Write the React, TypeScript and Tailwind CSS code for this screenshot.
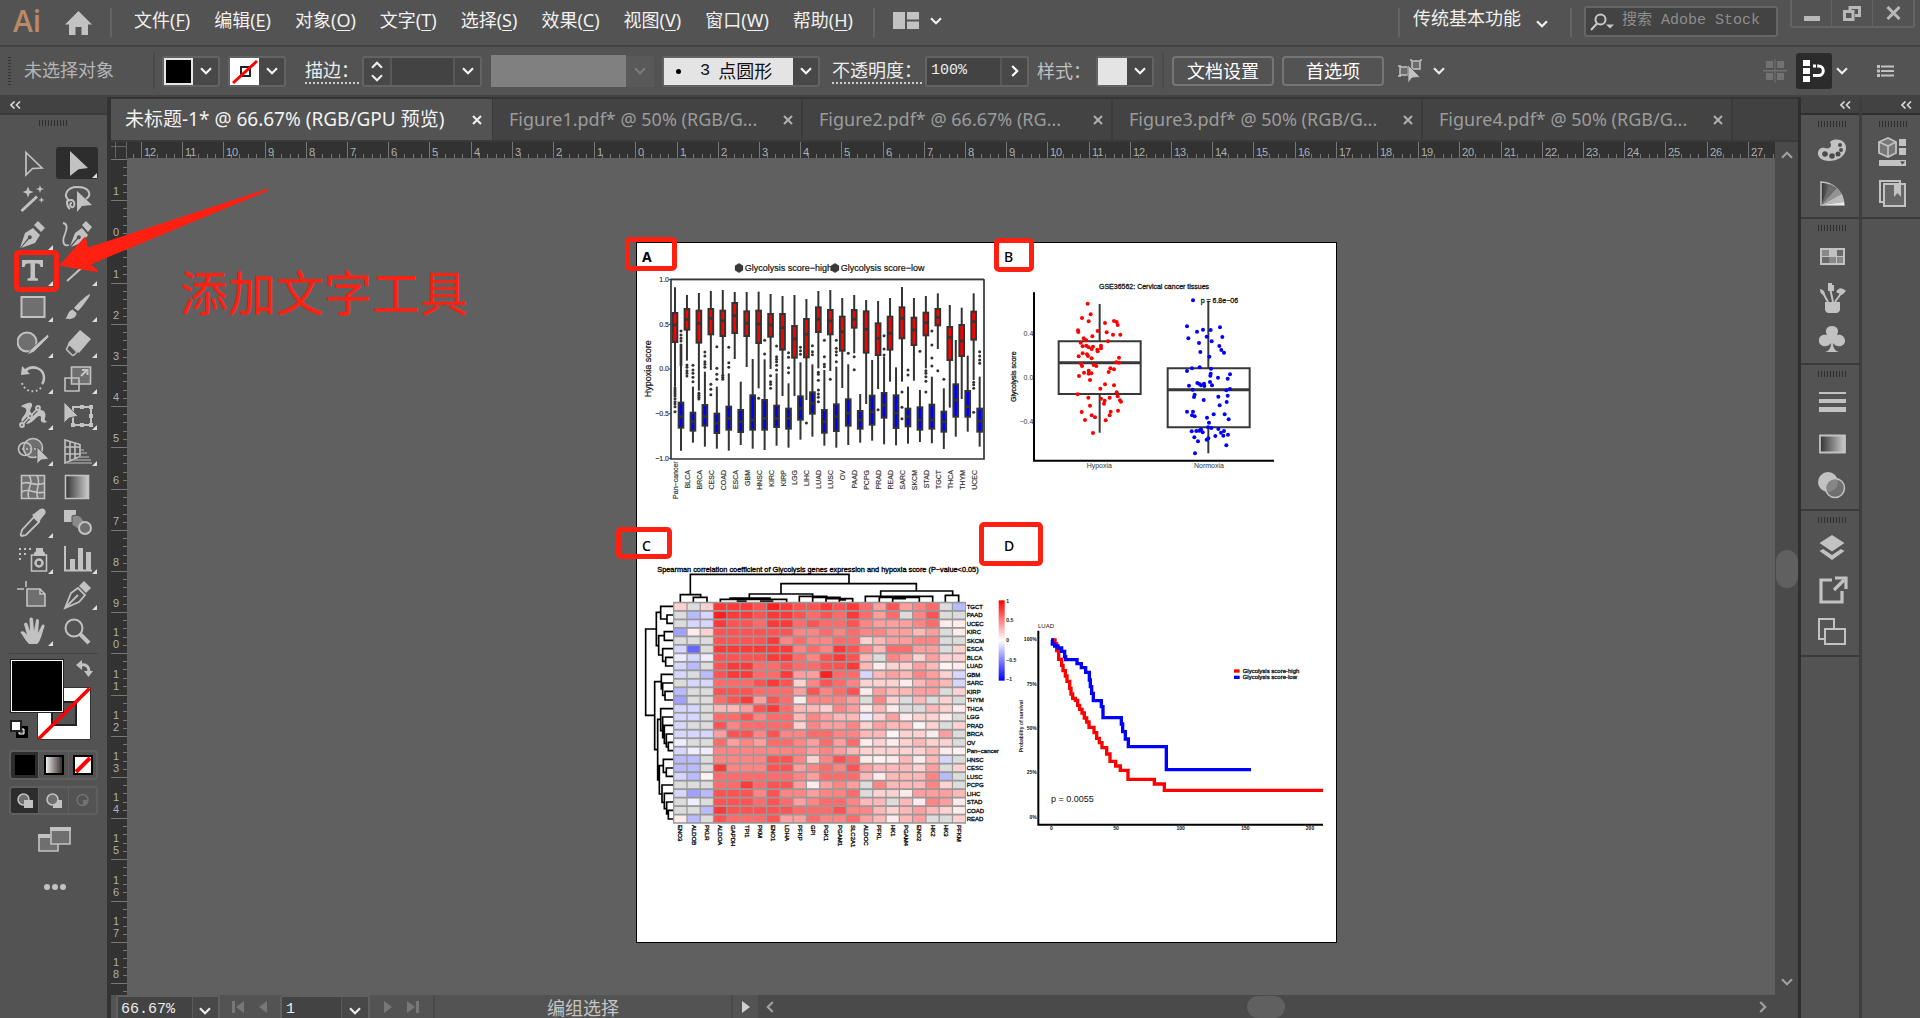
import React from "react";

const UI = "font-['Noto_Sans','Noto_Sans_CJK_SC',sans-serif]";
const MONO = "font-['Liberation_Mono','Noto_Sans_CJK_SC',monospace]";
const INK = "#c2c2c2";

function Chevron({ className = "" }: { className?: string }) {
  return (
    <svg className={"pointer-events-none shrink-0 " + className} width="12" height="8" viewBox="0 0 12 8" fill="none" stroke="currentColor" strokeWidth="2.2">
      <path d="M1 1.2 6 6.2 11 1.2" />
    </svg>
  );
}

function Close() {
  return (
    <svg width="10" height="10" viewBox="0 0 10 10" fill="none" stroke="currentColor" strokeWidth="2">
      <path d="M1 1 9 9M9 1 1 9" />
    </svg>
  );
}

function Divider({ className = "" }: { className?: string }) {
  return <div className={"w-[2px] shrink-0 bg-[#646464] " + className} />;
}

/* ---------- Menu bar ---------- */

const menus: [string, string][] = [
  ["文件", "F"], ["编辑", "E"], ["对象", "O"], ["文字", "T"], ["选择", "S"],
  ["效果", "C"], ["视图", "V"], ["窗口", "W"], ["帮助", "H"],
];

function MenuBar() {
  return (
    <header className="flex h-[45px] shrink-0 items-start bg-[#535353] text-[18px] text-[#f0f0f0]">
      <div className="ml-[13px] mt-[3px] w-[40px] font-['Open_Sans',sans-serif] text-[30px] font-semibold leading-[36px] text-[#b98a68]">Ai</div>
      <button aria-label="主页" className="ml-[12px] mt-[11px]">
        <svg width="27" height="24" viewBox="0 0 27 24" fill={INK}><path d="M13.500 0 27 13.500h-4V24h-6.500v-8h-6v8H4V13.500H0Z" /></svg>
      </button>
      <Divider className="ml-[18px] mt-[8px] h-[29px]" />
      <nav className="ml-[22px] mt-[7px] flex gap-[24px] leading-[27px]">
        {menus.map(([t, k]) => (
          <button key={k} className="whitespace-nowrap">{t}(<span className="underline underline-offset-[3px]">{k}</span>)</button>
        ))}
      </nav>
      <Divider className="ml-[20px] mt-[8px] h-[29px]" />
      <button aria-label="排列文档" className="ml-[18px] mt-[12px] flex items-center gap-[11px]">
        <svg width="26" height="17" viewBox="0 0 26 17" fill={INK}><path d="M0 0h12v17H0zM14 0h12v7.500H14zM14 9.500h12V17H14z" /></svg>
        <Chevron />
      </button>
      <div className="flex-1" />
      <Divider className="mt-[8px] h-[29px]" />
      <div className="relative ml-[13px] mt-[4px] w-[141px]">
        <select aria-label="工作区" className="w-full appearance-none bg-transparent leading-[28px] outline-none"><option>传统基本功能</option></select>
        <Chevron className="absolute right-[6px] top-[16px]" />
      </div>
      <Divider className="ml-[16px] mt-[8px] h-[29px]" />
      <div className="ml-[12px] mt-[6px] flex h-[31px] w-[194px] items-center gap-[7px] rounded-[3px] border-2 border-[#666] bg-[#434343] pl-[4px]">
        <svg className="shrink-0" width="25" height="18" viewBox="0 0 25 18" fill="none" stroke="#c8c8c8" strokeWidth="2"><circle cx="10.500" cy="6.500" r="5" /><path d="M7 10.500 1 17" /><path d="M16 11.500h8l-4 4z" fill="#c8c8c8" stroke="none" /></svg>
        <input aria-label="搜索" placeholder="搜索 Adobe Stock" className={"w-full min-w-0 bg-transparent text-[15px] outline-none placeholder:text-[#8e8e8e] " + MONO} />
      </div>
      <div className="ml-[12px] mr-[5px] flex h-[28px] rounded-b-[3px] border-x-2 border-b-2 border-[#636363] text-[#b8b8b8]">
        <button aria-label="最小化" className="flex w-[40px] items-center justify-center border-r border-[#636363]"><svg width="16" height="18" viewBox="0 0 16 18"><path fill="currentColor" d="M0 12h16v5H0z" /></svg></button>
        <button aria-label="还原" className="flex w-[41px] items-center justify-center border-r border-[#636363]"><svg width="18" height="15" viewBox="0 0 18 15" fill="none" stroke="currentColor" strokeWidth="3"><path d="M7 4.500V1.500h9.500v8H12M1.500 5.500H10v8H1.500z" /></svg></button>
        <button aria-label="关闭" className="flex w-[40px] items-center justify-center"><svg width="15" height="14" viewBox="0 0 15 14" fill="none" stroke="currentColor" strokeWidth="3"><path d="M1.500 1 13.500 13M13.500 1 1.500 13" /></svg></button>
      </div>
    </header>
  );
}

/* ---------- Control bar ---------- */

const box = "flex h-[31px] shrink-0 items-stretch rounded-[3px] border-2 border-[#636363] bg-[#484848]";
const dd = "flex w-[25px] items-center justify-center text-[#f4f4f4]";
const label = "shrink-0 whitespace-nowrap leading-[24px]";

function ControlBar() {
  return (
    <div className="flex h-[52px] shrink-0 items-center border-b-2 border-t-2 border-b-[#434343] border-t-[#434343] bg-[#535353] text-[18px] text-[#ececec]">
      <div className="ml-[8px] h-[28px] w-[3px] shrink-0 bg-[repeating-linear-gradient(#333_0_1px,transparent_1px_3px)]" />
      <span className="ml-[13px] w-[129px] shrink-0 whitespace-nowrap leading-[28px] pb-[2px] text-[#b4b4b4]">未选择对象</span>
      <div className="h-[36px] w-[2px] shrink-0 bg-[#4a4a4a]" />
      <button aria-label="填色" className={box + " ml-[7px]"}>
        <span className="w-[29px] border-2 border-[#e6e6e6] bg-black" />
        <span className={dd}><Chevron /></span>
      </button>
      <button aria-label="描边颜色" className={box + " ml-[8px]"}>
        <svg width="29" height="27" viewBox="0 0 29 27" fill="none"><path fill="#fff" d="M0 0h29v27H0z" /><path d="M11 9h9v9h-9z" stroke="#222" strokeWidth="2" /><path d="M3 25 27 3" stroke="#f00" strokeWidth="3" /></svg>
        <span className={dd}><Chevron /></span>
      </button>
      <label htmlFor="sw" className={label + " ml-[19px] border-b-2 border-dotted border-[#ccc]"}>描边：</label>
      <div className={box + " ml-[3px]"}>
        <div className="flex w-[26px] flex-col items-center justify-between py-[3px]">
          <button aria-label="增加" className="rotate-180"><Chevron className="block" /></button>
          <button aria-label="减少"><Chevron className="block" /></button>
        </div>
        <input id="sw" className="w-[65px] border-x-2 border-[#585858] bg-[#434343] outline-none" />
        <button aria-label="描边粗细" className={dd}><Chevron /></button>
      </div>
      <div className="ml-[9px] h-[32px] w-[135px] shrink-0 bg-[#808080]" />
      <div className="flex h-[31px] w-[28px] shrink-0 items-center justify-center bg-[#595959] text-[#7a7a7a]"><Chevron /></div>
      <button className={box + " ml-[8px]"}>
        <span className="flex w-[129px] items-center bg-[#e4e4e4] text-[#111]"><span className="ml-[12px] h-[5px] w-[5px] rounded-full bg-black" /><span className={"ml-[19px] text-[17px] " + MONO}>3</span><span className="ml-[8px] whitespace-nowrap">点圆形</span></span>
        <span className={dd}><Chevron /></span>
      </button>
      <label htmlFor="op" className={label + " ml-[12px] border-b-2 border-dotted border-[#ccc]"}>不透明度：</label>
      <div className={box + " ml-[3px]"}>
        <input id="op" defaultValue="100%" className={"w-[75px] border-r-2 border-[#585858] bg-[#434343] pl-[4px] text-[15px] outline-none " + MONO} />
        <button aria-label="不透明度滑块" className="flex w-[25px] items-center justify-center text-white"><Chevron className="-rotate-90" /></button>
      </div>
      <span className={label + " ml-[8px] text-[#c0c0c0]"}>样式：</span>
      <button aria-label="样式" className={box + " ml-[5px]"}>
        <span className="w-[29px] bg-[#e4e4e4]" />
        <span className={dd}><Chevron /></span>
      </button>
      <div className="ml-[8px] h-[36px] w-[2px] shrink-0 bg-[#4a4a4a]" />
      <button className="ml-[8px] h-[30px] w-[102px] shrink-0 rounded-[4px] border-2 border-[#757575] leading-[26px] text-white">文档设置</button>
      <button className="ml-[8px] h-[30px] w-[102px] shrink-0 rounded-[4px] border-2 border-[#757575] leading-[26px] text-white">首选项</button>
      <button aria-label="选择类似对象" className="ml-[14px] flex shrink-0 items-center gap-[10px]">
        <svg width="25" height="24" viewBox="0 0 25 24" fill="#6b6b6b" stroke={INK} strokeWidth="1.500"><path d="M14 2h8v8h-8zM2 8h8v8H2zM12 1h2m8 0h2M0 7h3M0 17h3" /><path d="M10 6v18l4-5 8-1z" fill={INK} stroke="#535353" strokeWidth=".7" /></svg>
        <Chevron />
      </button>
      <div className="flex-1" />
      <svg width="24" height="24" viewBox="0 0 24 24" fill="#727272"><path d="M3 2h7v7H3zM14 2h7v7h-7zM3 14h7v7H3zM14 14h7v7h-7zM0 11h24v1.500H0zM11.500 0h1v24h-1z" /></svg>
      <button aria-label="对齐像素" className="ml-[9px] flex h-[36px] w-[36px] items-center justify-center rounded-[3px] bg-[#2b2b2b]">
        <svg width="22" height="22" viewBox="0 0 22 22" fill="#fff"><path d="M0 0h7v6H0zM0 8h7v6H0zM0 16h7v6H0z" /><path d="M10 6h5.500a4.800 4.800 0 0 1 0 9.600H10" fill="none" stroke="#fff" strokeWidth="3" strokeDasharray="3 1.200 30" /></svg>
      </button>
      <Chevron className="ml-[4px]" />
      <button aria-label="面板菜单" className="ml-[29px] mr-[26px]">
        <svg width="17" height="12" viewBox="0 0 17 12" fill={INK}><path d="M0 0h3v3H0zM4 .5h13v2H4zM0 4.500h3v3H0zM4 5h13v2H4zM0 9h3v3H0zM4 9.500h13v2H4z" /></svg>
      </button>
    </div>
  );
}

/* ---------- Tool panel ---------- */

const line = { fill: "none", stroke: INK, strokeWidth: 1.6 } as const;
const dim = { fill: "#6f6f6f", stroke: INK, strokeWidth: 1.6 } as const;

type Tool = { name: string; more?: boolean; active?: boolean; icon: React.ReactNode };

const tools: Tool[] = [
  { name: "选择工具", icon: <path d="M9 5.500 25 21l-9.500.5L9 28z" {...line} strokeWidth={1.700} /> },
  { name: "直接选择工具", more: true, active: true, icon: <path d="M9 4 27 21l-9.500 1.200L9 29z" /> },
  { name: "魔棒工具", icon: <g><path d="M4.500 28 20 13.500" stroke={INK} strokeWidth="3" /><path d="M11 3.500l1.500 4 4 1.500-4 1.500-1.500 4-1.500-4L5.500 9l4-1.500zM23 2l1 3 3 1-3 1-1 3-1-3-3-1 3-1zM24.500 14l.8 2.200 2.200.8-2.200.8-.8 2.200-.8-2.200-2.200-.8 2.200-.8z" /></g> },
  { name: "套索工具", icon: <g><path d="M9 18C1 13 6 4 16 4c13 0 15 8 9 12M9 18c-5-3-3 6 0 8m-2-8c6-4 8 4 5 6-3 1-4-4-1-4" {...line} strokeWidth={2} /><path d="M16 8v21l5-6 10-1z" /></g> },
  { name: "钢笔工具", more: true, icon: <g><path d="M3 29 8 14l8-5 7 7-5 8-14 5 8-9a2 2 0 1 0-1-1z" /><path d="M17 6l4-4 7 7-4 4z" /></g> },
  { name: "曲率工具", icon: <g><path d="M2 4c5 1 4 6 2 11-3 7-2 13 4 11" {...line} strokeWidth={1.800} /><path d="M9 27l5-13 7-5 6 7-5 7-12 5 7-8a2 2 0 1 0-1-1zM21 6l4-4 6 6-4 5z" /></g> },
  { name: "文字工具", more: true, icon: <path d="M5 5h21v7h-2.500c-.4-2.400-1.200-3.500-3.500-3.500h-2V21c0 2 .6 2.300 3 2.500v2.300H10.500v-2.300c2.500-.2 3-.5 3-2.500V8.500h-2.300C9 8.500 8 9.600 7.500 12H5z" /> },
  { name: "直线段工具", more: true, icon: <path d="M6 26 26 8" {...line} strokeWidth={2} /> },
  { name: "矩形工具", more: true, icon: <path d="M4.500 6h23v20h-23z" {...dim} strokeWidth={2} /> },
  { name: "画笔工具", more: true, icon: <g><path d="M29 3c1 1-7 12-12 17l-4-3C17 12 27 3 29 3z" /><path d="M11.500 18.500l4 3.500c0 5-5 7-11.500 5.500 3-1 2-7 7.500-9z" /></g> },
  { name: "Shaper 工具", more: true, icon: <g><circle cx="10" cy="15" r="9.500" {...dim} strokeWidth={2} /><path d="M31 7l-17 15-4 6 7-3L32 10z" stroke="#535353" strokeWidth=".8" /></g> },
  { name: "橡皮擦工具", more: true, icon: <g><path d="M19 3l11 9-12 14L7 16z" /><path d="M8 17l8 8-3 3q-1 .8-2 0l-5-5q-1-1 0-2z" {...line} /></g> },
  { name: "旋转工具", more: true, icon: <g><path d="M8 8c7-7 19-3 19 7 0 3-1 5-2 6" {...line} strokeWidth={2.500} /><path d="M4 12l1-9 8 8z" /><path d="M5 20c3 10 16 11 20 3" {...line} strokeDasharray="1.800 2.600" strokeWidth={2} /></g> },
  { name: "比例缩放工具", more: true, icon: <g><path d="M10.500 4h19v17h-19z" {...dim} /><path d="M4 15h14v13H4z" {...line} /><path d="M20 13l6-6m-5 0h5.500v5" {...line} strokeWidth={2} /></g> },
  { name: "宽度工具", more: true, icon: <g><path d="M4 7c4-2 8-4 10-3 3 2-1 6-1 8 2 4 5-1 10-1 6 0 6 5 5 8-1 2 1 3 2 4-5 2-7-1-6-4 0-3-3-2-5 0-4 5-10 8-14 4-3-4 6-8 4-13-1-2-3-1-5-3z" /><path d="M5 26 21 9" stroke="#535353" strokeWidth="4" /><g {...dim} strokeWidth={1.800}><path d="M5 26 21 9" /><circle cx="5" cy="26" r="2" /><circle cx="13" cy="17" r="2" /><circle cx="21" cy="9" r="2" /></g></g> },
  { name: "自由变换工具", more: true, icon: <g><path d="M12 8h18v18H12z" {...line} strokeWidth={2} /><path d="M28 6h4v4h-4zM28 24h4v4h-4zM10 24h4v4h-4zM19 6h4v4h-4zM19 24h4v4h-4zM28 15h4v4h-4z" /><path d="M3 3v21l5-5 9-2z" stroke="#535353" strokeWidth=".8" /></g> },
  { name: "形状生成器工具", more: true, icon: <g><circle cx="16" cy="13" r="9.500" {...dim} /><circle cx="8" cy="14" r="6.500" {...line} /><path d="M5 14h14" {...line} strokeDasharray="2 2" /><path d="M20 12v17l4-4 8-1z" stroke="#535353" strokeWidth=".8" /></g> },
  { name: "透视网格工具", more: true, icon: <g><path d="M4 5l15 4.500v12L4 28zM9 6v20M14 8v16M4 12h15M4 19h15" {...line} /><path d="M20 15h3M20 18h6M17 22h11M12 25h18M6 28h25" {...line} stroke="#9a9a9a" /></g> },
  { name: "网格工具", icon: <g><path d="M4.500 4.500h23v23h-23z" {...dim} /><path d="M4.500 13c6-5 13 4 23-1M4.500 21c7-5 14 3 23 0M12 4.500c6 8-4 14 0 23M20 4.500c5 8-3 15 1 23" {...line} /></g> },
  { name: "渐变工具", icon: <path d="M4.500 4.500h23v23h-23z" fill="url(#gradDark)" stroke={INK} strokeWidth="1.600" /> },
  { name: "吸管工具", more: true, icon: <g><path d="M17 10l5 5L9 28c-2 1-3 0-4 1-1 0-2-1-1-2l1-4z" {...line} strokeWidth={1.800} /><path d="M15 8l3-2 5-4c4-2 7 2 5 5l-4 5-2 4z" /></g> },
  { name: "混合工具", icon: <g><path d="M3 3h12v12H3z" /><path d="M11 9q4-2 8 0l4 5v6l-6 2-6-4z" fill="#8a8a8a" stroke="#535353" /><circle cx="24" cy="21" r="6" {...dim} strokeWidth={2} /></g> },
  { name: "符号喷枪工具", more: true, icon: <g><path d="M14.500 12h15v16h-15z" {...line} /><path d="M19 5h7v3l2 2v3H17v-3l2-2z" /><circle cx="22" cy="20" r="3.500" {...line} strokeWidth={2.500} /><path d="M2 5h2v2H2zM7 5h2v2H7zM12 5h2v2h-2zM2 10h2v2H2zM7 10h2v2H7zM2 15h2v2H2z" /></g> },
  { name: "柱形图工具", more: true, icon: <g><path d="M4 3v24.500h27" {...line} strokeWidth={2} /><path d="M9 16h5v11H9zM17 5h5v22h-5zM25 9h5v18h-5z" /></g> },
  { name: "画板工具", icon: <path d="M10 10h13l5 5v12H10zM0 10h7M9 2v6M23 10v5h5" {...dim} /> },
  { name: "切片工具", more: true, icon: <g><path d="M4 29 10 14l7-5 7 7-6 7zL17 16" {...line} strokeWidth={1.800} /><path d="M18 7l5-5 7 7-5 5z" /></g> },
  { name: "抓手工具", more: true, icon: <path d="M12 29C9 26 6 21 3.500 17.500 5 15 8 17 10 20L7 9c1-2 3-1.500 3.500 0l2.500 7-.500-12c.5-2 3-2 3.500 0l1 12 2-11c1-2 3-1 3 1l-1 12 4-8c1.500-1 3 0 2.500 1.500C25 18 24 26 20 29z" /> },
  { name: "缩放工具", icon: <g><circle cx="13" cy="13" r="8.500" {...line} strokeWidth={2} /><path d="M19 19l9 9" {...line} strokeWidth={4} /></g> },
];

function Grip() {
  return <div className="h-[6px] w-[29px] bg-[repeating-linear-gradient(90deg,#2e2e2e_0_1px,transparent_1px_3px)]" />;
}

function Collapse() {
  return <svg width="11" height="8" viewBox="0 0 11 8" fill="none" stroke="#d8d8d8" strokeWidth="1.600"><path d="M4.500 0.500 1 4l3.500 3.500M10 0.500 6.500 4 10 7.500" /></svg>;
}

const modeRow = "ml-[9px] flex w-[89px] shrink-0 overflow-hidden rounded-[4px] border-2 border-[#5f5f5f]";
const modeSide = "flex w-[27px] items-center justify-center";
const modeMiddle = "flex flex-1 items-center justify-center border-x border-[#5f5f5f]";

function ToolPanel() {
  return (
    <aside className="flex w-[111px] shrink-0 flex-col border-r-4 border-[#333] bg-[#535353]">
      <button aria-label="折叠" className="flex h-[18px] shrink-0 items-center border-b-2 border-[#3a3a3a] bg-[#424242] pl-[10px]"><Collapse /></button>
      <div className="flex h-[30px] shrink-0 justify-center pt-[5px]"><Grip /></div>
      <div className="ml-[11px] grid w-[88px] grid-cols-2">
        {tools.map((t) => (
          <button key={t.name} aria-label={t.name} className="relative flex h-[36px] w-[44px] items-center justify-center">
            {t.active && <span className="absolute inset-x-[1px] inset-y-[2px] rounded-[3px] bg-[#2d2d2d]" />}
            <svg className="relative" width="32" height="32" viewBox="0 0 32 32" fill={INK}>{t.icon}</svg>
            {t.more && <svg className="absolute bottom-[3px] right-[2px]" width="5" height="5"><path d="M5 0v5H0z" fill="#ddd" /></svg>}
          </button>
        ))}
      </div>
      <div className="mx-[9px] mt-[4px] h-[1px] shrink-0 bg-[#444]" />
      <div className="relative mt-[5px] ml-[10px] h-[81px] w-[88px] shrink-0">
        <svg className="absolute left-[27px] top-[28px]" width="54" height="53" viewBox="0 0 54 53"><path d="M.5.500h53v52H.500z" fill="#fff" stroke="#333" /><path d="M15 15h24v23H15z" fill="#535353" stroke="#222" strokeWidth="2" /><path d="M1.500 52 52.500 1.500" stroke="#f00" strokeWidth="3.500" /></svg>
        <button aria-label="填色" className="absolute left-0 top-0 h-[54px] w-[54px] border border-[#222] bg-white p-[1px]"><span className="block h-full w-full bg-black" /></button>
        <button aria-label="互换填色和描边" className="absolute left-[66px] top-[1px]"><svg width="17" height="17" viewBox="0 0 17 17"><path d="M5 5c6-1 8 2 8 7" fill="none" stroke={INK} strokeWidth="3" /><path d="M6 0v10L0 5zM8 11h9l-4.500 6z" fill={INK} /></svg></button>
        <button aria-label="默认填色和描边" className="absolute left-0 top-[61px]"><svg width="18" height="18" viewBox="0 0 18 18"><path d="M6 6h12v12H6z" fill="#000" /><path d="M9 9h5v5H9z" fill="#555" stroke="#fff" /><path d="M1 1h10v10H1z" fill="#fff" stroke="#222" strokeWidth="2" /></svg></button>
      </div>
      <div className={modeRow + " mt-[10px] h-[30px]"}>
        <button aria-label="颜色" className={modeSide + " bg-[#2d2d2d]"}><span className="h-[20px] w-[20px] bg-black" /></button>
        <button aria-label="渐变" className={modeMiddle}><span className="h-[20px] w-[20px] border-2 border-black bg-linear-to-r from-[#eee] to-[#3b3230]" /></button>
        <button aria-label="无" className={modeSide}><svg width="20" height="20" viewBox="0 0 20 20"><path d="M1 1h18v18H1z" fill="#fff" stroke="#000" strokeWidth="2" /><path d="M3 17 17 3" stroke="#f00" strokeWidth="4" /></svg></button>
      </div>
      <div className={modeRow + " mt-[6px] h-[29px]"}>
        <button aria-label="正常绘图" className={modeSide + " bg-[#2d2d2d]"}><svg width="16" height="16" viewBox="0 0 16 16"><circle cx="6.500" cy="6.500" r="5.500" {...dim} strokeWidth={1.500} /><path d="M7 7h9v8H7z" fill={INK} /></svg></button>
        <button aria-label="背面绘图" className={modeMiddle}><svg width="16" height="16" viewBox="0 0 16 16"><path d="M7 7h9v8H7z" fill={INK} /><circle cx="6.500" cy="6.500" r="5.500" {...dim} strokeWidth={1.500} /></svg></button>
        <button aria-label="内部绘图" className={modeSide}><svg width="16" height="16" viewBox="0 0 16 16"><circle cx="7.500" cy="7" r="5.500" fill="none" stroke="#727272" strokeWidth="1.500" /><path d="M8 7h5v3l-5 3z" fill="#727272" /></svg></button>
      </div>
      <button aria-label="更改屏幕模式" className="ml-[38px] mt-[12px] w-[33px]"><svg width="33" height="26" viewBox="0 0 33 26"><path d="M1 8h19v16H1z" {...dim} /><path d="M0 7h12v4H0z" fill={INK} /><path d="M13 1h19v16H13z" {...dim} /><path d="M12 0h21v4H12z" fill={INK} /></svg></button>
      <button aria-label="编辑工具栏" className="ml-[44px] mt-[31px] flex w-[22px] justify-between"><i className="h-[6px] w-[6px] rounded-full bg-[#c2c2c2]" /><i className="h-[6px] w-[6px] rounded-full bg-[#c2c2c2]" /><i className="h-[6px] w-[6px] rounded-full bg-[#c2c2c2]" /></button>
    </aside>
  );
}

/* ---------- Tabs and rulers ---------- */

const tabs = ["Figure1.pdf* @ 50% (RGB/G...", "Figure2.pdf* @ 66.67% (RG...", "Figure3.pdf* @ 50% (RGB/G...", "Figure4.pdf* @ 50% (RGB/G..."];

function Tabs() {
  return (
    <div className="flex h-[43px] shrink-0 border-t-2 border-[#363636] bg-[#414141] text-[18px] text-[#9c9c9c]">
      <div className="flex w-[382px] shrink-0 items-center justify-between border-r border-[#383838] bg-[#535353] pl-[14px] pr-[10px] text-[19px] text-[#f2f2f2]">
        <button className="whitespace-nowrap">未标题-1* @ 66.67% (RGB/GPU 预览)</button>
        <button aria-label="关闭标签"><Close /></button>
      </div>
      {tabs.map((t) => (
        <div key={t} className="flex w-[310px] shrink-0 items-center justify-between border-r-2 border-[#3a3a3a] bg-[#434343] pl-[16px] pr-[8px]">
          <button className="whitespace-nowrap">{t}</button>
          <button aria-label="关闭标签" className="text-[#b0b0b0]"><Close /></button>
        </div>
      ))}
    </div>
  );
}

const CM = 41.2;

function RulerH() {
  return (
    <svg className="block h-[16px] min-w-0 flex-1 bg-[#323232] font-['Liberation_Sans',sans-serif]" fontSize="11" fill="#b0b0b0">
      {Array.from({ length: 41 }, (_, i) => {
        const x = Math.round(14 + i * CM);
        return (
          <g key={i}>
            <path d={`M${x + 0.5} 0V16`} stroke="#777" />
            {[1, 2, 3, 4].map((k) => <path key={k} d={`M${Math.round(x + (k * CM) / 5) + 0.5} 12V16`} stroke="#777" />)}
            {i < 40 && <text x={x + 3} y="14">{Math.abs(i - 12)}</text>}
          </g>
        );
      })}
      <path d="M6.500 12V16" stroke="#777" />
    </svg>
  );
}

function RulerV() {
  return (
    <svg className="block w-[16px] shrink-0 bg-[#323232] font-['Liberation_Sans',sans-serif]" height="100%" fontSize="11" fill="#b0b0b0" textAnchor="middle">
      {Array.from({ length: 21 }, (_, i) => {
        const y = Math.round(1 + i * CM);
        const text = String(Math.abs(i - 2));
        return (
          <g key={i}>
            <path d={`M0 ${y + 0.5}H16`} stroke="#777" />
            {[1, 2, 3, 4].map((k) => <path key={k} d={`M12 ${Math.round(y + (k * CM) / 5) + 0.5}H16`} stroke="#777" />)}
            {i > 0 && text.split("").map((c, j) => <text key={j} x="5" y={y - 5 - (text.length - 1 - j) * 12}>{c}</text>)}
          </g>
        );
      })}
    </svg>
  );
}

/* ---------- Figure A ---------- */

const cancers = "Pan−cancer BLCA BRCA CESC COAD ESCA GBM HNSC KIRC KIRP LGG LIHC LUAD LUSC OV PAAD PCPG PRAD READ SARC SKCM STAD TGCT THCA THYM UCEC".split(" ");

// whisker top, box top, median, box bottom, whisker bottom, then outliers
const high: number[][] = [
  [172, 247, 285, 338, 470, 474, 480, 486, 492, 498, 506, 515, 522, 530, 545], [195, 235, 268, 301, 392, 405, 412, 422, 430, 438], [189, 240, 280, 340, 482, 490, 496, 502, 507],
  [183, 235, 265, 315, 420, 463, 478, 494], [180, 240, 272, 320, 432, 436, 442, 448], [186, 217, 257, 311, 387], [186, 242, 280, 320, 411], [185, 240, 282, 341, 475, 505],
  [192, 250, 285, 322, 417, 437, 455, 463, 475], [198, 250, 293, 361, 498], [195, 286, 327, 385, 498], [207, 265, 313, 384, 510, 579],
  [183, 230, 268, 308, 415, 427, 433, 451, 480, 492, 502, 515], [180, 238, 273, 315, 423, 448], [204, 258, 305, 364, 474], [195, 238, 268, 295, 370, 380, 419],
  [210, 242, 298, 370, 522], [213, 278, 325, 377, 477, 539], [204, 258, 310, 361, 455], [171, 230, 265, 327, 455, 486, 532, 566], [204, 261, 300, 347, 452],
  [198, 246, 278, 318, 415, 422, 430, 440, 454, 486], [190, 235, 262, 288, 357, 422], [225, 289, 322, 392, 533], [233, 283, 333, 380, 507], [190, 243, 275, 331, 450, 457, 464, 475, 547],
];
const low: number[][] = [
  [405, 516, 560, 595, 662, 303, 315, 325, 333, 345, 351, 357, 363, 369, 375, 381, 387, 393, 399, 405], [470, 546, 575, 604, 638, 406, 420, 430, 442, 455], [425, 523, 560, 589, 650, 366, 378, 395, 403, 412],
  [470, 549, 580, 611, 656, 350, 415, 433, 448], [430, 528, 565, 601, 662, 352, 398, 412], [455, 538, 575, 608, 645], [387, 494, 570, 601, 656], [388, 508, 565, 601, 660, 331, 372],
  [430, 525, 565, 593, 647, 348, 380, 388, 395, 406, 420], [460, 534, 565, 598, 653, 368, 382, 413, 428], [397, 497, 535, 571, 629, 352, 362, 373], [403, 485, 520, 553, 620, 347, 365, 374],
  [420, 538, 575, 610, 647, 331, 380, 403, 410], [410, 521, 560, 605, 653, 331, 355, 365, 375, 395], [403, 506, 550, 589, 645, 370], [492, 541, 570, 598, 638],
  [390, 495, 545, 586, 632], [380, 487, 525, 565, 643, 317, 357, 375], [412, 494, 550, 596, 646], [470, 534, 560, 591, 641, 420, 435], [480, 530, 570, 601, 636, 364],
  [440, 522, 570, 598, 640, 303, 345, 384, 408], [475, 543, 575, 607, 657, 448], [330, 461, 510, 562, 620], [377, 481, 530, 562, 605], [440, 534, 573, 607, 650, 365, 378, 390, 400],
];

function Box({ x, d, color }: { x: number; d: number[]; color: string }) {
  const [wt, bt, m, bb, wb, ...out] = d;
  return (
    <g>
      <path d={`M${x} ${wt}V${wb}`} stroke="#333" strokeWidth="6" />
      <rect x={x - 7} y={bt + 2} width="14" height={bb - bt - 4} fill={color} stroke="#333" strokeWidth="6" />
      <path d={`M${x - 8} ${m}H${x + 8}`} stroke="#333" strokeWidth="8" />
      {out.map((o) => <circle key={o} cx={x} cy={o} r="4.500" fill="#333" />)}
    </g>
  );
}

function Hexagon({ x, y }: { x: number; y: number }) {
  return <path d={`M${x} ${y - 14}l12 7v14l-12 7-12-7v-14z`} fill="#3a3a3a" />;
}

function FigureA() {
  return (
    <svg className="absolute left-[-17px] top-[-13px] font-['Liberation_Sans',sans-serif]" width="390" height="290" viewBox="0 0 1170 870">
      <g fontSize="27" fill="#111" stroke="#111" strokeWidth=".6">
        <Hexagon x={357} y={114} /><text x="374" y="122">Glycolysis score−high</text>
        <Hexagon x={645} y={114} /><text x="662" y="122">Glycolysis score−low</text>
        <text transform="translate(94 502) rotate(-90)">Hypoxia score</text>
      </g>
      <path d="M153 149H1093" stroke="#999" strokeWidth="4" /><path d="M1092 148V687H153V148H1092" fill="none" stroke="#333" strokeWidth="5" />
      <g fontSize="21" fill="#333" stroke="#333" strokeWidth=".5" textAnchor="end">
        {["1.0", "0.5", "0.0", "−0.5", "−1.0"].map((t, i) => <g key={t}><text x="147" y={156 + i * 134}>{t}</text><path d={`M147 ${149 + i * 134}h6`} stroke="#333" strokeWidth="3" /></g>)}
      </g>
      {high.map((d, i) => <Box key={i} x={165 + i * 35.84} d={d} color="#f00" />)}
      {low.map((d, i) => <Box key={i} x={183 + i * 35.84} d={d} color="#00f" />)}
      <g fontSize="21" fill="#333" stroke="#333" strokeWidth=".5" textAnchor="end">
        {cancers.map((c, i) => <text key={c} transform={`translate(${174 + i * 35.84} ${i ? 720 : 694}) rotate(-90)`}>{c}</text>)}
      </g>
    </svg>
  );
}

/* ---------- Figure B ---------- */

const hypoxia = "323,221 332,253 306,264 326,274 375,279 402,273 410,276 413,285 294,301 295,306 353,303 380,307 399,314 421,314 337,319 311,325 319,331 302,338 384,334 308,349 319,347 326,352 339,350 335,357 352,359 363,347 363,355 353,364 308,370 321,373 324,378 296,379 335,385 417,383 303,401 306,408 341,405 349,408 409,397 417,398 391,415 402,418 386,426 312,428 326,422 326,431 334,430 297,438 330,450 375,463 402,466 361,476 410,487 293,493 413,499 325,503 363,506 389,503 374,512 372,521 420,511 423,515 330,527 414,542 305,546 392,545 389,556 335,556 345,562 315,570 377,571 339,609".split(" ");
const normoxia = "639,211 621,289 669,299 651,305 692,300 720,292 680,320 625,325 727,321 695,334 657,339 718,348 724,360 732,368 661,366 688,380 636,415 659,412 693,416 621,423 692,431 691,437 750,433 714,443 743,446 627,467 652,459 658,462 663,466 672,461 673,468 690,456 696,466 638,479 739,481 750,477 644,494 642,501 715,500 743,497 671,510 740,516 719,526 621,545 639,545 636,556 644,559 701,553 734,553 681,563 746,568 687,578 684,592 694,594 715,597 635,604 649,603 658,602 663,598 668,607 732,603 723,608 744,614 730,617 706,618 643,622 654,634 680,629 685,625 739,646 645,670".split(" ");

function Dots({ pts, color }: { pts: string[]; color: string }) {
  return <g fill={color}>{pts.map((p) => { const [x, y] = p.split(","); return <circle key={p} cx={x} cy={y} r="6" />; })}</g>;
}

function FigureB() {
  return (
    <svg className="absolute left-[343px] top-[-13px] font-['Liberation_Sans',sans-serif]" width="370" height="290" viewBox="0 0 1110 870">
      <g fill="none" stroke="#383838" strokeWidth="6"><path d="M359 222V334M359 492V608M236 334H482V492H236zM685 212V415M685 592V670M563 415H809V592H563z" /><path d="M236 398H482M563 479H809" strokeWidth="9" /></g>
      <path d="M162 187V692H882" fill="none" stroke="#000" strokeWidth="6" />
      <Dots pts={hypoxia} color="#f00" /><Dots pts={normoxia} color="#00f" />
      <g fontSize="21" fill="#111" stroke="#111" strokeWidth=".8">
        <text x="357" y="177">GSE36562: Cervical cancer tissues</text>
        <text x="662" y="219">p = 6.8e−06</text>
        <text transform="translate(108 516) rotate(-90)">Glycolysis score</text>
      </g>
      <g fontSize="21" fill="#333"><text x="320" y="714">Hypoxia</text><text x="642" y="714">Normoxia</text>
        <text x="160" y="317" textAnchor="end">0.4</text><text x="160" y="450" textAnchor="end">0.0</text><text x="160" y="582" textAnchor="end">−0.4</text></g>
    </svg>
  );
}

/* ---------- Figure C ---------- */

// digits: positive correlation in tenths; a–e: negative; g: not significant
const heat: [string, string][] = [
  ["TGCT", "2g288879877878647456gc"], ["PAAD", "gcb98878876768646g57gg"], ["UCEC", "gbb8776886766754445611"], ["KIRC", "d1277777755656554434g1"],
  ["SKCM", "ggg77778565566234455gg"], ["ESCA", "beg88888856587536644g2"], ["BLCA", "aba777788657873g542422"], ["LUAD", "bcg7886676677831224301"],
  ["GBM", "bgc78866844966b343542b"], ["SARC", "gbb666787257652221343b"], ["KIRP", "cgg77766647567143344g2"], ["THYM", "dgg67847615554g52g3g2g"],
  ["THCA", "bbg33478633254131gg321"], ["LGG", "bbg66756635433a241221g"], ["PRAD", "bgg75666625445243302g2"], ["BRCA", "bbb477575566553302214g"],
  ["OV", "agg645466546461212322g"], ["Pan−cancer", "baa5555555454322222310"], ["HNSC", "ccg55557752576101313bg"], ["CESC", "ccg85557745657433324g2"],
  ["LUSC", "bc066666654666313335cg"], ["PCPG", "ggg66867741454g533352g"], ["LIHC", "bdc77757554556g2214443"], ["STAD", "gag7776764566533g31541"],
  ["COAD", "ggc8777776667553234321"], ["READ", "1cg7666744655643134gg2"],
];
const genes = "ENO3 ALDOB PKLR ALDOA GAPDH TPI1 PKM ENO1 LDHA PFKP GPI PGK1 PGAM1 SLC2A1 ALDOC PFKL HK1 PGAM4 ENO2 HK2 HK3 PFKM".split(" ");
const blues: Record<string, number> = { a: 0.07, b: 0.16, c: 0.27, d: 0.37, e: 0.6 };

function shade(c: string) {
  if (c === "g") return "#dcdcdc";
  if (c in blues) { const v = Math.round(255 * (1 - blues[c])); return `rgb(${v},${v},255)`; }
  const v = Math.round(255 * (1 - Math.max(0.05, Number(c) / 10 - 0.02)));
  return `rgb(255,${v},${v})`;
}

function FigureC() {
  return (
    <svg className="absolute left-[-27px] top-[277px] font-['Liberation_Sans',sans-serif]" width="435" height="330" viewBox="0 0 1305 990">
      <text x="142" y="155" fontSize="22" fill="#000" stroke="#000">Spearman correlation coefficient of Glycolysis genes expression and hypoxia score (P−value&lt;0.05)</text>
      <g fill="none" stroke="#000" strokeWidth="5">
        <path d="M241 224V163H717V191M513 222V191H919V213M418 237V222H608V230M812 229V213H1028V226M1006 246V226H1046V246M766 246V229H968V246M808 246V232H928V246M848 246V236H888M211 246V224H272V232M250 246V232H291V246M331 246V238H490M530 246V238H440M360 238V234H480V238M380 244H410M450 244H490M568 246V229H650V236M608 246V232H690V236M648 246V236H728V246M688 246V240H708" />
        <path d="M139 327H107V586H134M152 277H139V377H146M190 259H152V297H171M190 285H171V310H190M163 347H146V405H158M190 335H163V361H190M190 386H158V424H167M190 412H167V438H190M154 485H134V689H143M190 463H154V507H158M190 489H158V526H165M190 514H165V540H190M152 598H143V780H148M190 566H152V632H158M190 591H158V653H163M190 616H163V670H169M190 642H169V681H175M190 667H175V692H190M160 737H148V822H156M190 718H160V757H169M190 744H169V769H190M190 795H156V847H163M190 820H163V866H170M190 846H170V882H175M190 871H175V897H190" />
      </g>
      <path d="M189 245H1068V911H189z" fill="#999" />
      {heat.map(([name, row], r) => (
        <g key={name}>
          {row.split("").map((c, k) => <rect key={k} x={193 + k * 39.82} y={250 + r * 25.46} width="36" height="20" fill={shade(c)} />)}
          <text x="1070" y={266 + r * 25.5} fontSize="18" fill="#111" stroke="#111">{name}</text>
        </g>
      ))}
      {genes.map((g, i) => <text key={g} transform={`translate(${205 + i * 39.82} 915) rotate(90)`} fontSize="18" fill="#111" stroke="#111">{g}</text>)}
      <rect x="1166" y="241" width="18" height="241" fill="url(#heatScale)" />
      <g fontSize="15" fontWeight="bold" fill="#222">{["1", "0.5", "0", "−0.5", "−1"].map((t, i) => <text key={t} x="1189" y={248 + i * 59}>{t}</text>)}</g>
    </svg>
  );
}

/* ---------- Figure D ---------- */

function FigureD() {
  return (
    <svg className="absolute left-[333px] top-[277px] font-['Liberation_Sans',sans-serif]" width="367" height="330" viewBox="0 0 1101 990">
      <g fill="none" strokeWidth="10">
        <path stroke="#f00" d="M245 360H255V372H260V392H266V418H275V436H279V452H286V468H291V484H299V505H303V522H308V535H316V541H323V556H329V568H336V579H343V594H350V606H357V622H372V638H380V655H388V668H396V683H410V702H420V724H437V738H451V751H474V778H553V792H583V811H1059" />
        <path stroke="#00f" d="M243 360H247V372H254V378H264V384H275V394H284V410H287V419H321V431H334V443H347V457H358V480H361V500H365V520H370V542H394V560H399V593H454V612H458V635H466V657H475V680H589V749H843" />
      </g>
      <path d="M205 332V914H1059" fill="none" stroke="#000" strokeWidth="6" />
      <g fill="#111">
        <text x="204" y="324" fontSize="18">LUAD</text>
        <text x="243" y="846" fontSize="27">p = 0.0055</text>
        <text transform="translate(159 697) rotate(-90)" fontSize="15" fontWeight="bold" fill="#222">Probability of survival</text>
        <g fontSize="18" stroke="#111" strokeWidth=".9"><text x="818" y="459">Glycolysis score-high</text><text x="818" y="477">Glycolysis score-low</text></g>
        <g fontSize="15" fontWeight="bold" textAnchor="end">{["100%", "75%", "50%", "25%", "0%"].map((t, i) => <text key={t} x="200" y={364 + i * 133}>{t}</text>)}</g>
        <g fontSize="15" fontWeight="bold" textAnchor="middle">{["0", "50", "100", "150", "200"].map((t, i) => <text key={t} x={244 + i * 194} y="929">{t}</text>)}</g>
      </g>
      <path d="M792 448h17v10h-17z" fill="#f00" /><path d="M792 467h17v10h-17z" fill="#00f" />
    </svg>
  );
}

function Artboard() {
  return (
    <div className={"absolute left-[509px] top-[84px] h-[701px] w-[701px] border border-black bg-white text-[14px] leading-[20px] text-black " + UI}>
      <FigureA /><FigureB /><FigureC /><FigureD />
      <span className="absolute left-[5px] top-[4px] font-bold">A</span>
      <span className="absolute left-[367px] top-[4px] font-medium">B</span>
      <span className="absolute left-[5px] top-[293px] font-medium">C</span>
      <span className="absolute left-[367px] top-[293px] font-medium">D</span>
    </div>
  );
}

/* ---------- Status bar ---------- */

const nav = "flex w-[25px] items-center justify-center text-[#777]";

function StatusBar() {
  return (
    <footer className="flex h-[23px] shrink-0 items-stretch bg-[#535353] text-[#ececec]">
      <div className="relative ml-[5px] flex w-[104px] rounded-t-[3px] border-x-2 border-t-2 border-[#606060] bg-[#484848]">
        <select aria-label="缩放" className={"w-full appearance-none bg-[linear-gradient(90deg,#434343_74px,#5c5c5c_74px,#5c5c5c_75px,#484848_75px)] pl-[3px] pt-[4px] text-[15px] leading-[17px] " + MONO}><option>66.67%</option></select>
        <Chevron className="absolute right-[7px] top-[10px]" />
      </div>
      <button aria-label="首项" className={nav + " ml-[5px]"}><svg width="12" height="12" viewBox="0 0 12 12" fill="currentColor"><path d="M0 0h3v12H0zM12 0v12L4 6z" /></svg></button>
      <button aria-label="上一项" className={nav}><svg width="8" height="12" viewBox="0 0 8 12" fill="currentColor"><path d="M8 0v12L0 6z" /></svg></button>
      <div className="relative ml-[5px] flex w-[90px] rounded-t-[3px] border-x-2 border-t-2 border-[#606060]">
        <select aria-label="画板导航" className={"w-full appearance-none bg-[linear-gradient(90deg,#434343_59px,#5c5c5c_59px,#5c5c5c_60px,#484848_60px)] pl-[4px] pt-[4px] text-[15px] leading-[17px] " + MONO}><option>1</option></select>
        <Chevron className="absolute right-[7px] top-[10px]" />
      </div>
      <button aria-label="下一项" className={nav + " ml-[5px]"}><svg width="8" height="12" viewBox="0 0 8 12" fill="currentColor"><path d="M0 0v12L8 6z" /></svg></button>
      <button aria-label="末项" className={nav}><svg width="12" height="12" viewBox="0 0 12 12" fill="currentColor"><path d="M9 0h3v12H9zM0 0v12L8 6z" /></svg></button>
      <div className={"ml-[8px] w-[300px] border-x-2 border-[#4a4a4a] pt-[4px] text-center text-[18px] leading-[19px] text-[#c4c4c4] " + UI}>编组选择</div>
      <button aria-label="显示" className="flex w-[25px] items-center justify-center text-[#d0d0d0]"><svg width="8" height="12" viewBox="0 0 8 12" fill="currentColor"><path d="M0 0v12L8 6z" /></svg></button>
      <div className="flex flex-1 items-center justify-between bg-[#4a4a4a] px-[6px] text-[#a0a0a0]">
        <Chevron className="rotate-90" />
        <div className="mr-[2px] h-[22px] w-[38px] rounded-full bg-[#606060]" />
        <Chevron className="-rotate-90" />
      </div>
      <div className="w-[23px] shrink-0 bg-[#4a4a4a]" />
    </footer>
  );
}

/* ---------- Right docks ---------- */

type Panel = [string, React.ReactNode];

const dockOne: Panel[][] = [
  [
    ["颜色", <g><path d="M15 5c8-4 16 1 15 8-1 8-9 12-17 12C6 25 1 21 2 16c1-4 4-5 7-4s6 0 6-3-2-2 0-4z" /><g fill="#4a4a4a"><circle cx="9" cy="18" r="2.800" /><circle cx="16" cy="20" r="2.800" /><circle cx="22" cy="18" r="2.500" /><circle cx="25" cy="14" r="2" /><circle cx="24" cy="9" r="2" /></g></g>],
    ["颜色参考", <g><path d="M5 4c12 0 22 10 23 23H5z" fill="url(#gradDark)" stroke={INK} strokeWidth="1.500" /><path d="M5 27 28 24v3z" fill="#e6e6e6" /><path d="M5 27 26 16l2 8z" fill="#bbb" /><path d="M5 27 21 10l5 6z" fill="#939393" /><path d="M5 27 14 6l7 4z" fill="#6c6c6c" /></g>],
  ],
  [
    ["色板", <g><path d="M4 8h25v17H4z" /><path d="M6 10h7v6H6zM13 17h7v6h-7z" fill="#888" /><path d="M21 10h6v6h-6zM6 17h7v6H6z" fill="#6a6a6a" /><path d="M21 17h6v6h-6z" fill="#888" /></g>],
    ["画笔", <g><path d="M9 20h15v8q-1 3-3 3H12q-2 0-3-3z" /><path d="M12 20 6 9M17 20 14 6M19 20l7-10" {...line} strokeWidth={2} /><path d="M4 7q5 1 5 6-5 0-5-6zM12 1h4v2h2v6h-6zM20 10q4-7 10-1l-4 4z" /></g>],
    ["符号", <path d="M17 19c4 6 13 3 12-3-1-5-5-6-8-5 3-6-1-9-5-9s-8 3-5 9c-3-1-8 0-8 5-1 6 8 9 12 3 0 5-2 8-6 9h14c-4-1-6-4-6-9z" />],
  ],
  [
    ["描边", <path d="M3 6h27v2H3zM3 13h27v4H3zM3 21h27v5H3z" />],
    ["渐变", <path d="M4 7.500h25v17H4z" fill="url(#gradDark)" stroke={INK} strokeWidth="1.800" />],
    ["透明度", <g><circle cx="12" cy="12" r="10" /><circle cx="19" cy="18" r="9.500" fill="#777" fillOpacity=".8" stroke={INK} strokeWidth="1.500" /></g>],
  ],
  [
    ["图层", <path d="M16 3l12.500 8L16 19.500 3.500 11zM7 17l9 6 9-6 3.500 2L16 28 3.500 19z" />],
    ["资源导出", <g><path d="M16 6H5v22h21V17" fill="none" stroke={INK} strokeWidth="3.200" /><path d="M18 16 28 6M19 4h11v11" fill="none" stroke={INK} strokeWidth="3.200" /></g>],
    ["画板", <g fill="#555" stroke={INK} strokeWidth="2"><path d="M3 3h15v20H3z" /><path d="M9 13h20v15H9z" /></g>],
  ],
];

const dockTwo: Panel[][] = [
  [
    ["属性", <g><path d="M2 6l9-4 8 4v11l-8 4-9-4z" fill="#777" stroke={INK} strokeWidth="1.800" /><path d="M2 6l9 4 8-4M11 10v11" {...line} /><path d="M22 3h7v7h-7zM22 12h7v7h-7zM2 24h27v6H2z" /><path d="M23 25.500h5l-2.500 3z" fill="#444" /></g>],
    ["库", <g><path d="M6 24H3V3h20v3" {...line} strokeWidth={2} /><path d="M7 6h21v22H7z" fill="#666" stroke={INK} strokeWidth="2" /><path d="M17 6h7v13l-3.500-4L17 19z" /></g>],
  ],
];

function Dock({ groups }: { groups: Panel[][] }) {
  return (
    <aside className="flex w-[58px] shrink-0 flex-col bg-[#535353]">
      <button aria-label="展开面板" className="flex h-[18px] shrink-0 items-center justify-end border-b-2 border-[#2f2f2f] bg-[#424242] pr-[8px]"><Collapse /></button>
      {groups.map((g, i) => (
        <div key={i} className="flex flex-col items-center border-b-2 border-[#3a3a3a] pb-[2px] pl-[4px] pt-[6px]">
          <Grip />
          <div className="mt-[4px] flex flex-col">
            {g.map(([n, icon]) => (
              <button key={n} aria-label={n} className="flex h-[42px] w-[44px] items-center justify-center"><svg width="32" height="32" viewBox="0 0 32 32" fill={INK}>{icon}</svg></button>
            ))}
          </div>
        </div>
      ))}
    </aside>
  );
}

/* ---------- Annotations drawn over the window ---------- */

function Annotations() {
  return (
    <div className="pointer-events-none absolute inset-0">
      <svg className="absolute left-[60px] top-[186px]" width="212" height="90" viewBox="60 186 212 90"><path d="M61 265 85 238 87 249 267 190 89 264 97 271z" fill="#ff2012" stroke="#ff2012" strokeWidth="2" strokeLinejoin="round" /></svg>
      <span className="absolute left-[14px] top-[250px] h-[42px] w-[45px] rounded-[5px] border-5 border-[#ff2012]" />
      <span className="absolute left-[625px] top-[237px] h-[34px] w-[52px] rounded-[5px] border-5 border-[#ff2012]" />
      <span className="absolute left-[994px] top-[238px] h-[34px] w-[40px] rounded-[5px] border-5 border-[#ff2012]" />
      <span className="absolute left-[616px] top-[527px] h-[32px] w-[56px] rounded-[5px] border-5 border-[#ff2012]" />
      <span className="absolute left-[979px] top-[522px] h-[44px] w-[64px] rounded-[5px] border-5 border-[#ff2012]" />
      <p className="absolute left-[180px] top-[260px] whitespace-nowrap font-['Noto_Sans_CJK_SC',sans-serif] text-[48px] leading-[60px] text-[#ff2012]">添加文字工具</p>
    </div>
  );
}

export default function App() {
  return (
    <div className={"relative flex h-screen w-full flex-col overflow-hidden bg-[#535353] " + UI}>
      <svg className="absolute" width="0" height="0">
        <defs>
          <linearGradient id="gradDark"><stop offset="0" stopColor="#333" /><stop offset="1" stopColor="#ccc" /></linearGradient>
          <linearGradient id="heatScale" x1="0" y1="0" x2="0" y2="1"><stop offset="0" stopColor="#f00" /><stop offset=".5" stopColor="#fff" /><stop offset="1" stopColor="#00f" /></linearGradient>
        </defs>
      </svg>
      <MenuBar />
      <ControlBar />
      <div className="flex min-h-0 flex-1">
        <ToolPanel />
        <main className="flex min-w-0 flex-1 flex-col">
          <Tabs />
          <div className="flex min-h-0 flex-1 border-t-2 border-[#3a3a3a]">
            <div className="flex min-w-0 flex-1 flex-col">
              <div className="flex h-[16px] shrink-0">
                <svg width="16" height="16" className="shrink-0 bg-[#323232]"><path d="M4.500 0V16M0 4.500H16M15.500 0V16" stroke="#666" fill="none" /></svg>
                <RulerH />
              </div>
              <div className="flex min-h-0 flex-1">
                <RulerV />
                <div className="relative min-w-0 flex-1 overflow-hidden bg-[#606060]"><Artboard /></div>
              </div>
            </div>
            <div className="flex w-[23px] shrink-0 flex-col items-center justify-between bg-[#4a4a4a] py-[9px] text-[#a0a0a0]">
              <Chevron className="rotate-180" />
              <div className="h-[38px] w-[22px] rounded-full bg-[#606060]" />
              <Chevron />
            </div>
          </div>
          <StatusBar />
        </main>
        <div className="flex gap-[3px] border-l-3 border-[#2f2f2f] bg-[#3e3e3e]">
          <Dock groups={dockOne} />
          <Dock groups={dockTwo} />
        </div>
      </div>
      <Annotations />
    </div>
  );
}
